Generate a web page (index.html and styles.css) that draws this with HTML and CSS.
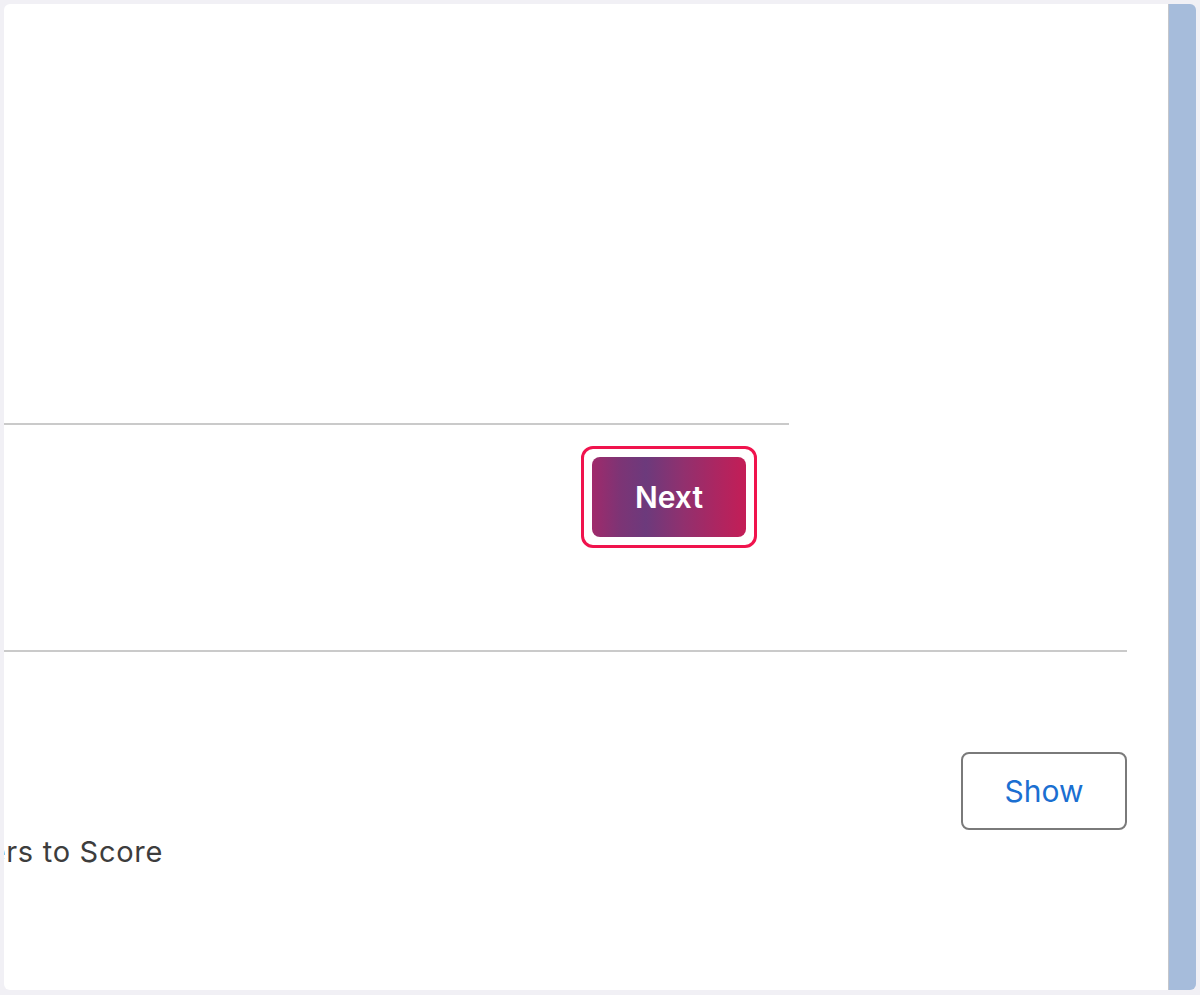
FILE: index.html
```html
<!DOCTYPE html>
<html lang="en">
<head>
  <meta charset="UTF-8" />
  <title>Quiz settings</title>
  <link rel="stylesheet" href="styles.css">
</head>
<body>
  <div class="frame">
    <div class="panel">
      <div class="content">
        <div class="step"></div>
        <div class="actions">
          <span class="focus-ring">
            <button class="next-btn">Next</button>
          </span>
        </div>

        <!-- settings -->
        <div class="settings">
          <div class="setting">
            <div class="setting-label">Answers to Score</div>
            <button class="show-btn">Show</button>
          </div>
        </div>
      </div>
    </div>
    <div class="sidebar"></div>
  </div>
</body>
</html>
```

FILE: styles.css
```css
html, body {
  height: 100%;
}
body {
  margin: 0;
  background: #f1f0f5;
  font-family: Inter, 'Liberation Sans', Arial, sans-serif;
  color: #3d3d3d;
}
.frame {
  display: flex;
  height: 986px;
  margin: 4px 4px 5px 4px;
  border-radius: 6px;
  overflow: hidden;
}
.panel {
  flex: 1;
  background: white;
  overflow: hidden;
}
.sidebar {
  width: 27px;
  background: #a6bcdb;
  border-left: 1px solid #c4c6cb;
}
.content {
  margin-left: -140px;
}
.step {
  width: 925px;
  height: 419px;
  border-bottom: 2px solid #cacaca;
}
.actions {
  width: 925px;
  display: flex;
  justify-content: flex-end;
  box-sizing: border-box;
  padding: 21px 32px 0 0;
  margin-bottom: 102px;
}
.focus-ring {
  display: inline-flex;
  border: 3px solid #f0134d;
  border-radius: 12px;
  padding: 8px;
}
.next-btn {
  width: 154px;
  height: 80px;
  border: none;
  border-radius: 8px;
  background: linear-gradient(90deg, #a02a6b 0%, #7d3475 18%, #6c3a7c 35%, #92306e 60%, #c41d56 100%);
  color: white;
  font-family: inherit;
  font-size: 30px;
  font-weight: 600;
  cursor: pointer;
}
.settings {
  width: 1263px;
  border-top: 2px solid #cacaca;
  padding-top: 100px;
}
.setting {
  display: flex;
  justify-content: space-between;
  align-items: flex-start;
}
.setting-label {
  width: 299px;
  padding-top: 83px;
  font-size: 29px;
  letter-spacing: 0.7px;
  line-height: 1.2;
  text-align: right;
  white-space: nowrap;
}
.show-btn {
  width: 166px;
  height: 78px;
  background: white;
  border: 2px solid #7a7a7a;
  border-radius: 8px;
  color: #1b6fd1;
  font-family: inherit;
  font-size: 30px;
  cursor: pointer;
}
```
